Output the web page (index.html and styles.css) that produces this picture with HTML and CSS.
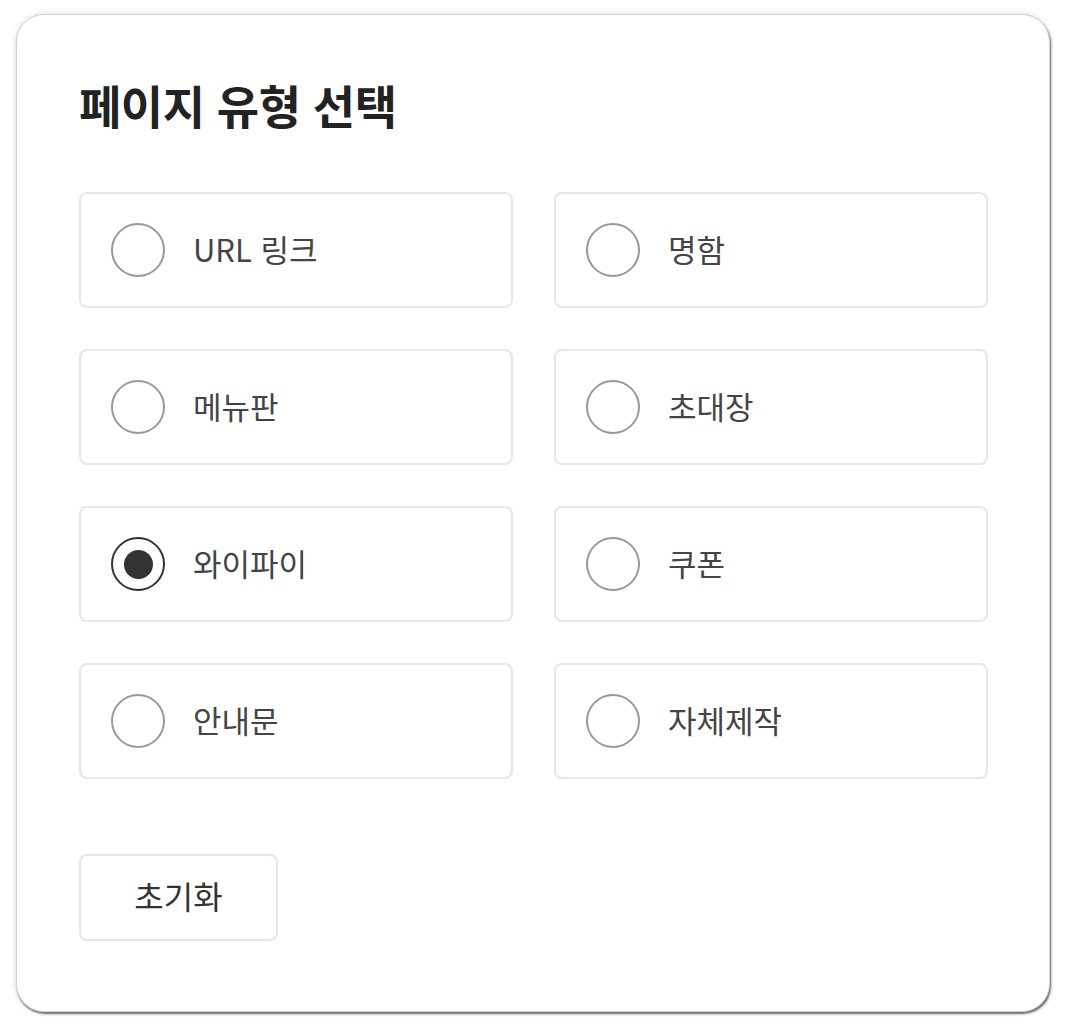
FILE: index.html
```html
<!DOCTYPE html>
<html lang="ko">
<head>
  <meta charset="UTF-8">
  <meta name="viewport" content="width=device-width, initial-scale=1.0">
  <title>페이지 유형 선택</title>
  <link rel="stylesheet" href="styles.css">
</head>
<body>
  <div class="card">
    <h1 class="title">페이지 유형 선택</h1>

    <!-- 유형 선택 -->
    <div class="type-grid">
      <label class="type-option"><span class="radio"></span><span class="type-label">URL 링크</span></label>
      <label class="type-option"><span class="radio"></span><span class="type-label">명함</span></label>
      <label class="type-option"><span class="radio"></span><span class="type-label">메뉴판</span></label>
      <label class="type-option"><span class="radio"></span><span class="type-label">초대장</span></label>
      <label class="type-option checked"><span class="radio"></span><span class="type-label">와이파이</span></label>
      <label class="type-option"><span class="radio"></span><span class="type-label">쿠폰</span></label>
      <label class="type-option"><span class="radio"></span><span class="type-label">안내문</span></label>
      <label class="type-option"><span class="radio"></span><span class="type-label">자체제작</span></label>
    </div>

    <button class="reset-button" type="button">초기화</button>
  </div>
</body>
</html>
```

FILE: styles.css
```css
/* 기본 */
body {
  margin: 0;
  padding: 14px 16px;
  background: #fff;
  font-family: "Noto Sans CJK KR", "Noto Sans", sans-serif;
  color: #333;
}
.card {
  width: 1034px;
  height: 998px;
  box-sizing: border-box;
  padding: 62px 60px 0 62px;
  border: 1px solid #d2d2d2;
  border-radius: 28px;
  background: #fff;
  box-shadow: 1px 2px 2px rgba(0,0,0,0.55), 0 0 6px rgba(0,0,0,0.14);
}
.title {
  margin: 0 0 60px;
  font-size: 46px;
  line-height: 1.2;
  font-weight: 700;
  letter-spacing: -0.5px;
  color: #222;
}
/* 선택 목록 */
.type-grid {
  display: grid;
  grid-template-columns: 434px 434px;
  column-gap: 41px;
  row-gap: 41px;
}
.type-option {
  display: flex;
  align-items: center;
  gap: 28px;
  height: 116px;
  box-sizing: border-box;
  padding-left: 30px;
  border: 2px solid #e6e6e6;
  border-radius: 8px;
  cursor: pointer;
}
.radio {
  width: 54px;
  height: 54px;
  box-sizing: border-box;
  border: 2px solid #999;
  border-radius: 50%;
  display: flex;
  align-items: center;
  justify-content: center;
}
.type-option.checked .radio {
  border-color: #333;
}
.type-option.checked .radio::after {
  content: "";
  width: 29px;
  height: 29px;
  border-radius: 50%;
  background: #333;
}
.type-label {
  font-size: 31px;
  color: #444;
  padding-bottom: 4px;
}
/* 초기화 */
.reset-button {
  margin-top: 75px;
  width: 199px;
  height: 87px;
  padding: 0 0 6px;
  border: 2px solid #e6e6e6;
  border-radius: 8px;
  background: #fff;
  font-family: inherit;
  font-size: 32px;
  color: #333;
  cursor: pointer;
}
```
